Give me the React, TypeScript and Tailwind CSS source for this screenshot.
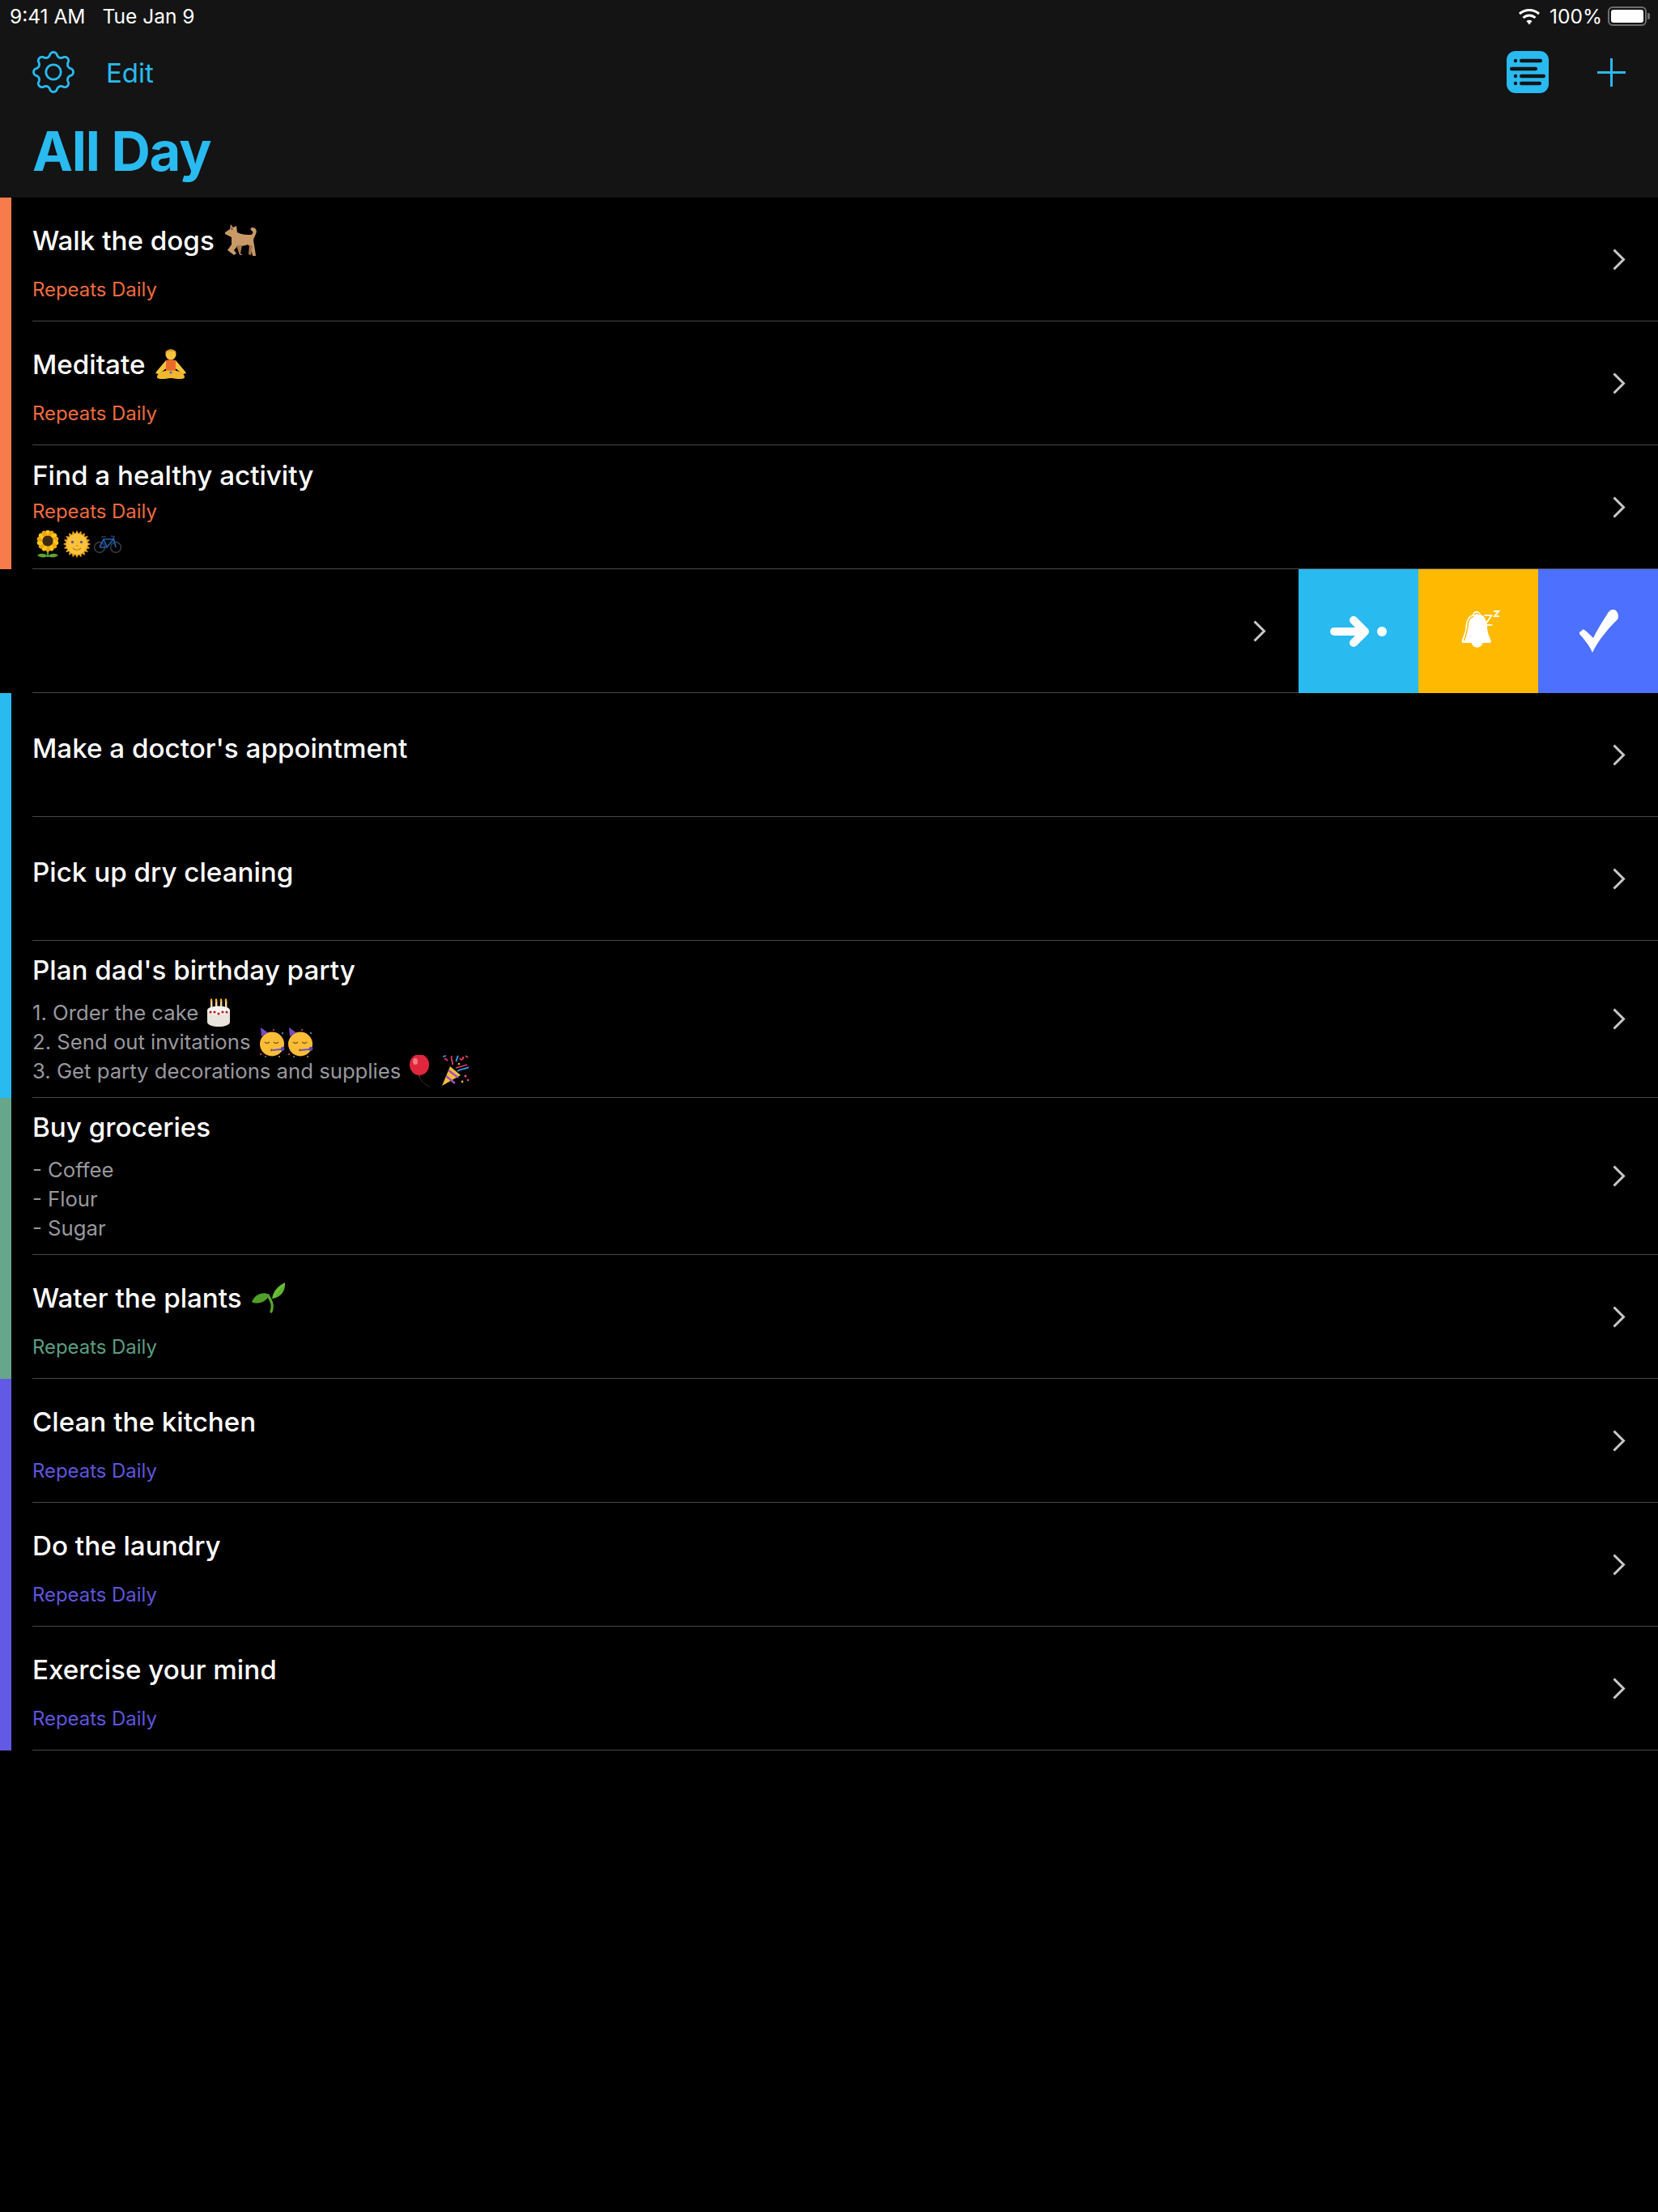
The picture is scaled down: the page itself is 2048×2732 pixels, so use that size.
import React from "react";

const Chevron = () => (
  <svg width="16" height="27" viewBox="0 0 16 27" fill="none" className="shrink-0">
    <path d="M1.5 1.5 L13.5 13.5 L1.5 25.5" stroke="#c8c8c8" strokeWidth="3" />
  </svg>
);

const rays = (n: number) => Array.from({ length: n }, (_, i) => (i * 360) / n);

const gearPath = () => {
  const pts: string[] = [];
  for (let i = 0; i <= 240; i++) {
    const t = (i / 240) * Math.PI * 2;
    const w = Math.cos(8 * t);
    const s = Math.sign(w) * Math.pow(Math.abs(w), 0.65);
    const r = 21.9 + 2.6 * s;
    pts.push(`${(26 + r * Math.sin(t)).toFixed(2)} ${(26 - r * Math.cos(t)).toFixed(2)}`);
  }
  return `M${pts.join(" L")} Z`;
};

const Gear = () => (
  <svg width="52" height="52" viewBox="0 0 52 52" fill="none" className="shrink-0">
    <path d={gearPath()} stroke="#29baf0" strokeWidth="2.8" strokeLinejoin="round" />
    <circle cx="26" cy="26" r="9.2" stroke="#29baf0" strokeWidth="2.8" />
  </svg>
);

const Dog = () => (
  <svg width="42" height="42" viewBox="0 0 42 42" className="shrink-0">
    <path d="M8 1 L11 5 L15 3 L16 11 C22 14 28 14 33 14 C36 13 36 10 34 9 C32 8 32 5 35 5 C39 5 41 9 39 13 C38 16 36 18 36 21 L38 33 L39 40 L35 40 L33 30 L29 26 C25 28 21 28 17 27 L12 33 L15 37 L12 39 L4 33 L9 26 L9 17 L5 15 L1 13 L1 11 L7 7 Z" fill="#c99a68" />
    <path d="M15 27 L19 39 L23 39 L20 37 L22 27 Z" fill="#a87b4e" />
    <path d="M31 26 L30 38 L33 39 L35 28 Z" fill="#a87b4e" />
    <path d="M9 3 L11 8 L8 8 Z" fill="#8a5f3c" />
  </svg>
);

const Meditate = () => (
  <svg width="40" height="40" viewBox="0 0 40 40" className="shrink-0">
    <circle cx="20" cy="8" r="6.5" fill="#f6c33c" />
    <path d="M13 6 C14 0 26 0 27 6 C24 3 16 3 13 6 Z" fill="#d99a2c" />
    <path d="M14 15 L3 28 L1 31 L5 32 L17 23 Z M26 15 L37 28 L39 31 L35 32 L23 23 Z" fill="#f6c33c" />
    <path d="M14 15 C17 14 23 14 26 15 L26 28 L14 28 Z" fill="#ec6b2c" />
    <path d="M3 36 C3 29 14 27 20 28 C26 27 37 29 37 36 C37 39 27 38 20 37 C13 38 3 39 3 36 Z" fill="#f2b72f" />
    <circle cx="20" cy="30" r="1.6" fill="#3b78c9" />
  </svg>
);

const Sunflower = () => (
  <svg width="30" height="34" viewBox="0 0 30 34" className="shrink-0">
    <path d="M15 22 L15 33" stroke="#4f9a2d" strokeWidth="2.4" />
    <path d="M15 32 C11 28 6 28 2 31 C6 34 11 34 15 32 Z M15 32 C19 28 24 28 28 31 C24 34 19 34 15 32 Z" fill="#5aa534" />
    {rays(14).map((a, i) => (
      <ellipse key={a} cx="15" cy="3.4" rx="3" ry="4" fill={i % 2 === 0 ? "#fbc91e" : "#f1a60c"} transform={`rotate(${a} 15 13)`} />
    ))}
    <circle cx="15" cy="13" r="6.6" fill="#3d2a13" />
  </svg>
);

const Sun = () => (
  <svg width="34" height="34" viewBox="0 0 34 34" className="shrink-0">
    {rays(20).map((a) => (
      <path key={a} d="M15 4 L17 0 L19 4 Z" fill="#f5a81c" transform={`rotate(${a} 17 17)`} />
    ))}
    <circle cx="17" cy="17" r="13.2" fill="#fbc23a" />
    <circle cx="11.5" cy="14.5" r="1.7" fill="#6d5a7e" />
    <circle cx="22.5" cy="14.5" r="1.7" fill="#6d5a7e" />
    <path d="M12 22 C15 25 19 25 22 22" stroke="#c6731b" strokeWidth="1.2" fill="none" />
    <path d="M15.5 19 L18.5 19" stroke="#dd8e1f" strokeWidth="1.2" />
  </svg>
);

const Bike = () => (
  <svg width="34" height="24" viewBox="0 0 34 24" className="shrink-0" fill="none">
    <circle cx="7" cy="16" r="6.4" stroke="#3a3a3c" strokeWidth="1.6" />
    <circle cx="27" cy="16" r="6.4" stroke="#3a3a3c" strokeWidth="1.6" />
    <path d="M7 16 L12 6 L24 6 L16 16 L7 16 M12 6 L16 16 M24 4 L27 16" stroke="#1d5fb0" strokeWidth="1.7" />
    <path d="M9 3 L15 3 M21 2 L26 3" stroke="#3a3a3c" strokeWidth="1.6" />
  </svg>
);

const Cake = () => (
  <svg width="30" height="36" viewBox="0 0 30 36" className="shrink-0">
    {[6, 12, 18, 24].map((x) => (
      <g key={x}>
        <rect x={x - 1} y="3" width="2.4" height="11" fill="#f1d9a8" />
        <ellipse cx={x} cy="2.4" rx="1.3" ry="2.2" fill="#f5b12e" />
      </g>
    ))}
    <path d="M1 15 L29 15 L29 29 C29 37 1 37 1 29 Z" fill="#e9e4dc" />
    <ellipse cx="15" cy="15" rx="14" ry="5.5" fill="#f8f5ef" />
    {[5, 10, 15, 20, 25].map((x) => (
      <circle key={x} cx={x} cy={x === 15 ? 19 : 17} r="1.6" fill="#b81e2e" />
    ))}
  </svg>
);

const Party = () => (
  <svg width="33" height="38" viewBox="0 0 33 38" className="shrink-0">
    <circle cx="16" cy="21.5" r="15" fill="#f9bd38" />
    <path d="M2 1 L11 7.5 L3 12 Z" fill="#7b4bc4" />
    <path d="M7 19 C9 21 11 21 13 19 M18 19 C20 21 22 21 24 19" stroke="#8a5a20" strokeWidth="1.4" fill="none" />
    <path d="M17 29 L27 28" stroke="#6f55c5" strokeWidth="2.2" />
    <circle cx="29" cy="27.5" r="2.4" fill="#5a48b0" />
    <circle cx="15.5" cy="29" r="1.4" fill="#8a5a20" />
    <circle cx="2" cy="34" r="1.1" fill="#e34a4a" />
    <circle cx="29" cy="8" r="1.1" fill="#3ba6e0" />
    <circle cx="18" cy="4" r="1.1" fill="#e3487a" />
    <circle cx="8" cy="37" r="0.9" fill="#3ba6e0" />
    <circle cx="25" cy="37" r="0.9" fill="#e8b020" />
  </svg>
);

const Balloon = () => (
  <svg width="30" height="40" viewBox="0 0 30 40" className="shrink-0" fill="none">
    <path d="M13 24 C13 30 16 32 20 36 L26 40" stroke="#333" strokeWidth="1" />
    <ellipse cx="13" cy="12" rx="12" ry="13" fill="#e0263c" />
    <path d="M11 24 L15 24 L13 27 Z" fill="#b81c30" />
    <ellipse cx="8" cy="8" rx="3" ry="4" fill="#f37a85" />
  </svg>
);

const Popper = () => (
  <svg width="36" height="40" viewBox="0 0 36 40" className="shrink-0" fill="none">
    <path d="M1 38 L11 14 L24 25 Z" fill="#f3bd3b" />
    <path d="M6 26 L17 35 M9 19 L21 28" stroke="#a44fc1" strokeWidth="2.4" />
    <path d="M14 12 C15 8 11 6 13 1 M18 16 L32 12 M4 4 L8 7 M23 4 C24 7 28 6 27 2 M30 1 L33 3" stroke="#e03a6a" strokeWidth="1.8" />
    <path d="M20 20 C25 16 30 18 34 15 M2 2 L6 1 M18 8 C20 6 19 3 21 1" stroke="#3aa0e8" strokeWidth="1.8" />
    <circle cx="30" cy="26" r="1.6" fill="#e8459a" />
    <circle cx="26" cy="33" r="1.4" fill="#e8b020" />
    <circle cx="33" cy="31" r="1.3" fill="#e8459a" />
    <circle cx="22" cy="11" r="1.3" fill="#e8b020" />
  </svg>
);

const Seedling = () => (
  <svg width="42" height="38" viewBox="0 0 42 38" className="shrink-0" fill="none">
    <path d="M24 36 C27 28 24 22 20 16" stroke="#58a62c" strokeWidth="3.2" strokeLinecap="round" />
    <path d="M25 26 C24 16 28 6 41 0 C42 10 36 19 25 20 Z" fill="#5fb52f" />
    <path d="M0 24 C4 14 14 11 22 15 C18 24 8 28 0 24 Z" fill="#4f9f28" />
    <path d="M27 18 C30 12 34 7 40 2" stroke="#8ed25b" strokeWidth="1" />
  </svg>
);

type RowData = {
  title: string;
  emoji?: React.ReactNode;
  sub?: string;
  subClass?: string;
  notes?: React.ReactNode[];
  pad: string;
  height: string;
  extra?: React.ReactNode;
};

const Row = ({ r }: { r: RowData }) => (
  <div className={`flex items-center ml-[26px] pr-[40px] border-b border-[#48484a] ${r.height}`}>
    <div className={`flex-1 self-start flex flex-col ${r.pad}`}>
      <div className="flex items-center gap-[12px] h-[40px] text-[33.2px] font-medium text-white leading-[40px]">
        <span>{r.title}</span>
        {r.emoji}
      </div>
      {r.sub && <div className={`text-[23.9px] leading-[36px] ${r.subClass}`}>{r.sub}</div>}
      {r.extra}
      {r.notes && (
        <div className="mt-[15px] flex flex-col text-[25.7px] leading-[36.2px] text-[#98989d]">
          {r.notes.map((n, i) => (
            <div key={i} className="flex items-center gap-[10px] h-[36.2px]">{n}</div>
          ))}
        </div>
      )}
    </div>
    <Chevron />
  </div>
);

const orange = "text-[#ef6b3f]";
const green = "text-[#5b9e80]";
const purple = "text-[#5e55dd]";

const group1: RowData[] = [
  { title: "Walk the dogs", emoji: <Dog />, sub: "Repeats Daily", subClass: `mt-[23px] ${orange}`, pad: "pt-[33px]", height: "h-[153px]" },
  { title: "Meditate", emoji: <Meditate />, sub: "Repeats Daily", subClass: `mt-[23px] ${orange}`, pad: "pt-[33px]", height: "h-[153px]" },
  {
    title: "Find a healthy activity",
    sub: "Repeats Daily",
    subClass: `mt-[7px] ${orange}`,
    pad: "pt-[17px]",
    height: "h-[153px]",
    extra: (
      <div className="flex items-center gap-[4px] h-[36px] pl-[4px] mt-[4px]">
        <Sunflower />
        <Sun />
        <Bike />
      </div>
    ),
  },
];

const group2: RowData[] = [
  { title: "Make a doctor's appointment", pad: "pt-[48px]", height: "h-[153px]" },
  { title: "Pick up dry cleaning", pad: "pt-[48px]", height: "h-[153px]" },
  {
    title: "Plan dad's birthday party",
    pad: "pt-[16px]",
    height: "h-[194px]",
    notes: [
      <><span>1. Order the cake</span><Cake /></>,
      <>
        <span>2. Send out invitations</span>
        <span className="flex gap-[2px]"><Party /><Party /></span>
      </>,
      <><span>3. Get party decorations and supplies</span><Balloon /><Popper /></>,
    ],
  },
];

const group3: RowData[] = [
  {
    title: "Buy groceries",
    pad: "pt-[16px]",
    height: "h-[194px]",
    notes: [<span>- Coffee</span>, <span>- Flour</span>, <span>- Sugar</span>],
  },
  { title: "Water the plants", emoji: <Seedling />, sub: "Repeats Daily", subClass: `mt-[23px] ${green}`, pad: "pt-[33px]", height: "h-[153px]" },
];

const group4: RowData[] = [
  { title: "Clean the kitchen", sub: "Repeats Daily", subClass: `mt-[23px] ${purple}`, pad: "pt-[33px]", height: "h-[153px]" },
  { title: "Do the laundry", sub: "Repeats Daily", subClass: `mt-[23px] ${purple}`, pad: "pt-[33px]", height: "h-[153px]" },
  { title: "Exercise your mind", sub: "Repeats Daily", subClass: `mt-[23px] ${purple}`, pad: "pt-[33px]", height: "h-[153px]" },
];

const Group = ({ bar, rows }: { bar: string; rows: RowData[] }) => (
  <div className={`border-l-[14px] ${bar}`}>
    {rows.map((r) => (
      <Row key={r.title} r={r} />
    ))}
  </div>
);

const ListIcon = () => (
  <svg width="52" height="52" viewBox="0 0 52 52">
    <rect width="52" height="52" rx="11" fill="#29baf0" />
    <g fill="#141414">
      <circle cx="11" cy="12" r="2.2" />
      <rect x="16" y="9.8" width="28" height="4.4" rx="2.2" />
      <rect x="4" y="19.8" width="34" height="4.4" rx="2.2" />
      <circle cx="11" cy="31" r="2.2" />
      <rect x="16" y="28.8" width="32" height="4.4" rx="2.2" />
      <circle cx="11" cy="40" r="2.2" />
      <rect x="16" y="37.8" width="27" height="4.4" rx="2.2" />
    </g>
  </svg>
);

const Wifi = () => (
  <svg width="28" height="21" viewBox="0 0 28 21" fill="none">
    <path d="M2 7 C9 1 19 1 26 7" stroke="#fff" strokeWidth="3" />
    <path d="M6.5 12 C11 8 17 8 21.5 12" stroke="#fff" strokeWidth="3" />
    <path d="M10.5 16 L14 20.5 L17.5 16 C15.5 14.3 12.5 14.3 10.5 16 Z" fill="#fff" />
  </svg>
);

const Battery = () => (
  <div className="flex items-center">
    <div className="w-[48px] h-[24px] rounded-[6px] border-2 border-[#6e6e6e] p-[2px]">
      <div className="w-full h-full rounded-[3px] bg-white" />
    </div>
    <div className="w-[3px] h-[8px] ml-[1px] rounded-r-[2px] bg-[#6e6e6e]" />
  </div>
);

const ArrowDot = () => (
  <svg width="70" height="38" viewBox="0 0 70 38" fill="none">
    <path d="M5 19 L40 19 M29 5 L43 19 L29 33" stroke="#fff" strokeWidth="10" strokeLinecap="round" strokeLinejoin="round" />
    <circle cx="64" cy="19" r="6" fill="#fff" />
  </svg>
);

const SnoozeBell = () => (
  <svg width="48" height="48" viewBox="0 0 54 54" fill="none" className="ml-[6px] mb-[3px]">
    <path d="M21 1 C17 1 16 4 16 6 C9 8 7 14 6 22 C6 30 3 35 1 41 C0 44 1 45 3 45 L39 45 C41 45 42 44 41 41 C38 34 36 30 36 22 C35 14 33 8 27 6 C27 4 25 1 21 1 Z" fill="#fff" />
    <path d="M14 44 C15 54 29 54 30 44 Z" fill="#fff" />
    <path d="M17 8 C11 10 9 16 9 22 C8 30 6 36 4 42" stroke="#ffba00" strokeWidth="1.6" />
    <path d="M18 6 C19 3 24 3 25 6" stroke="#ffba00" strokeWidth="1.4" />
    <path d="M32 7 L42 7 L33 20 L43 20" stroke="#fff" strokeWidth="2" />
    <path d="M45 1 L52 1 L46 8 L53 8" stroke="#fff" strokeWidth="2" />
  </svg>
);

const Check = () => (
  <svg width="52" height="54" viewBox="0 0 52 54" fill="none">
    <path d="M5 27 C3 26 3 29 3 30 C8 36 14 42 19 53 C26 38 38 24 50 12 C52 9 51 2 46 0 C42 -1 39 2 37 6 C31 15 25 25 20 35 C16 31 12 27 9 25 C7 24 6 25 5 27 Z" fill="#fff" />
  </svg>
);

export default function App() {
  return (
    <div className="w-[2048px] h-[2732px] bg-black font-['Inter','Liberation_Sans',sans-serif] overflow-hidden">
      <header className="h-[244px] bg-[#141414] flex flex-col">
        <div className="h-[40px] flex items-center justify-between pl-[12px] pr-[10px] text-[24.5px] text-white">
          <div className="flex gap-[21px]">
            <span>9:41 AM</span>
            <span>Tue Jan 9</span>
          </div>
          <div className="flex items-center gap-[11px]">
            <Wifi />
            <span className="mr-[-4px]">100%</span>
            <Battery />
          </div>
        </div>
        <div className="mt-[23px] h-[52px] flex items-center pl-[40px] pr-[40px]">
          <Gear />
          <span className="ml-[39px] pt-[3px] text-[33px] text-[#29baf0]">Edit</span>
          <div className="ml-auto flex items-center gap-[60px]">
            <ListIcon />
            <svg width="35" height="35" viewBox="0 0 35 35">
              <path d="M17.5 0 V35 M0 17.5 H35" stroke="#29baf0" strokeWidth="3" />
            </svg>
          </div>
        </div>
        <h1 className="mt-[36px] pl-[40px] text-[67px] leading-[72px] tracking-[-1.2px] font-bold text-[#29baf0]">All Day</h1>
      </header>

      <main>
        <Group bar="border-[#f87c4b]" rows={group1} />
        <div className="flex h-[153px]">
          <div className="ml-[40px] flex-1 flex items-center justify-end pr-[40px] border-b border-[#48484a]">
            <Chevron />
          </div>
          <div className="w-[148px] bg-[#29baf0] flex items-center justify-center"><ArrowDot /></div>
          <div className="w-[148px] bg-[#ffba00] flex items-center justify-center"><SnoozeBell /></div>
          <div className="w-[148px] bg-[#4d70ff] flex items-center justify-center"><Check /></div>
        </div>
        <Group bar="border-[#29baf0]" rows={group2} />
        <Group bar="border-[#66a68a]" rows={group3} />
        <Group bar="border-[#6259e5]" rows={group4} />
      </main>
    </div>
  );
}
